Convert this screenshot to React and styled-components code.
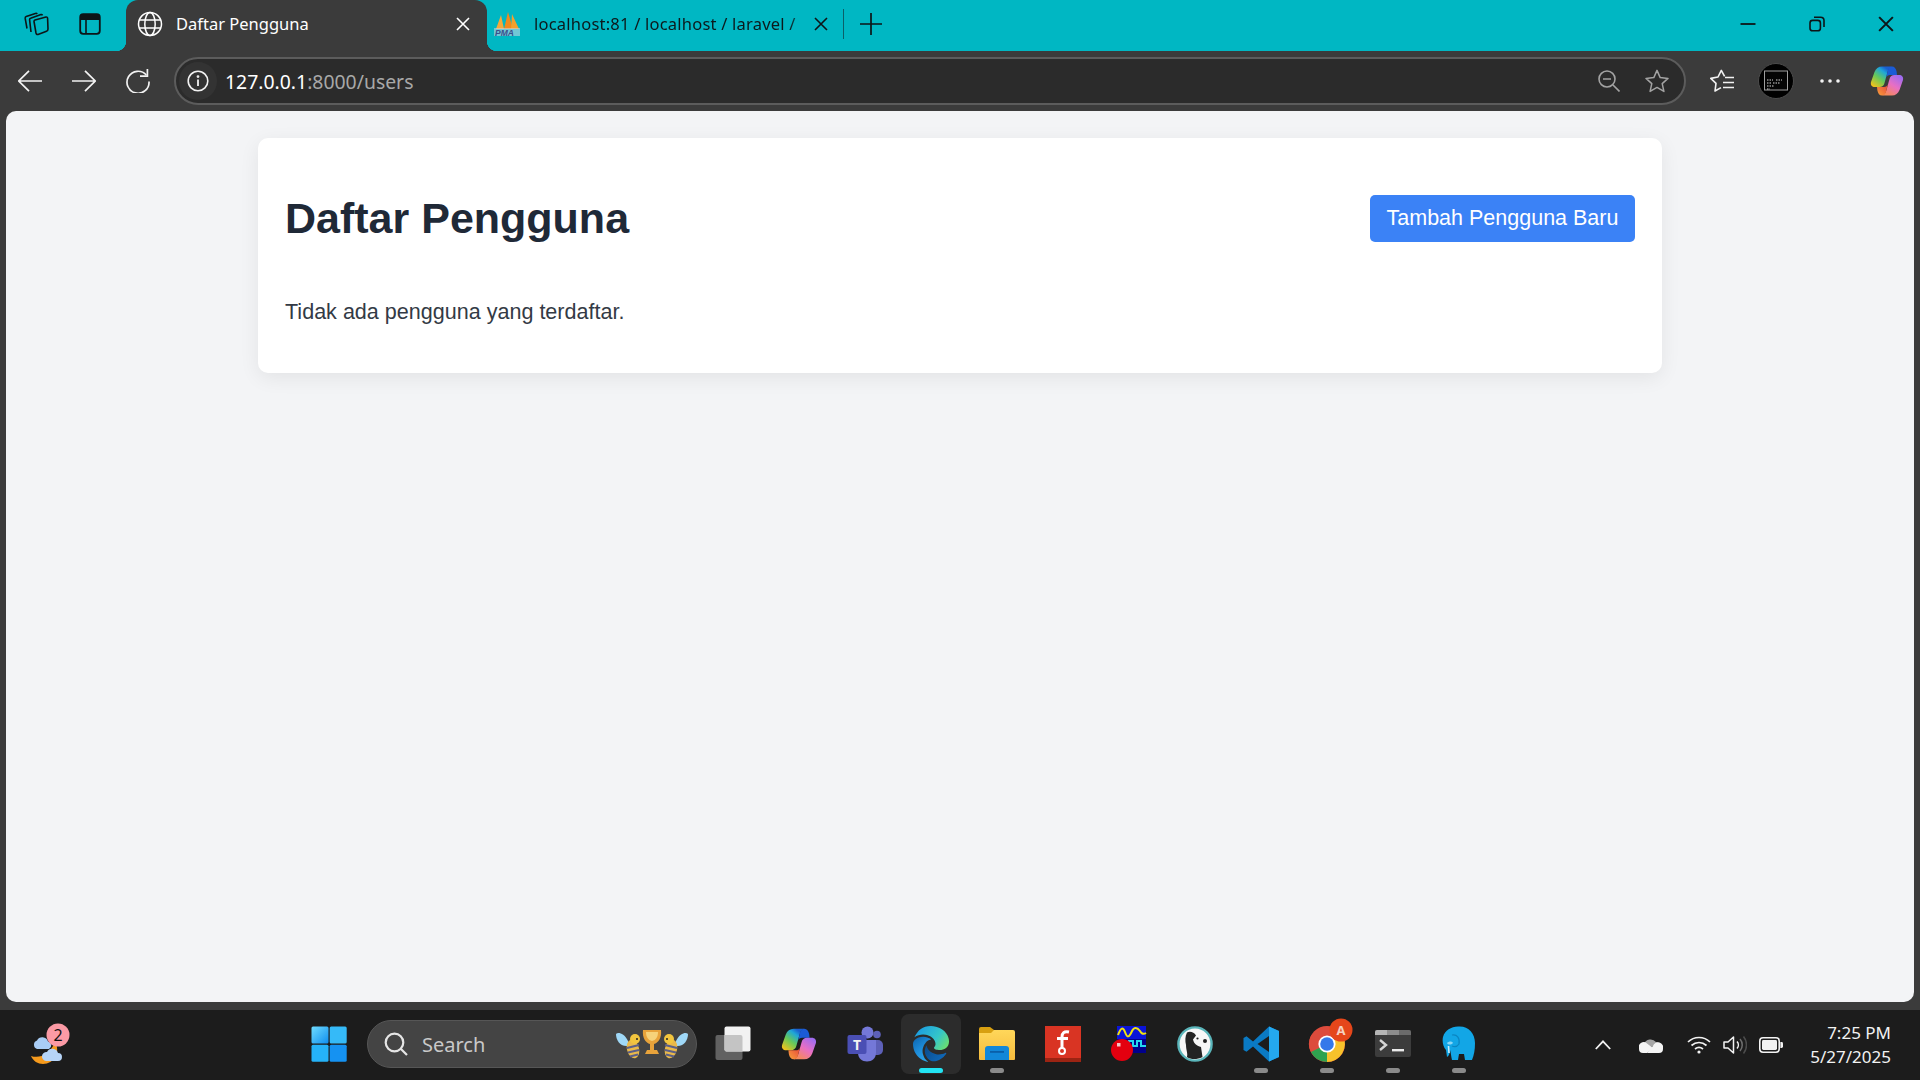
import React from 'react'
import styled, { createGlobalStyle } from 'styled-components'

const GlobalStyle = createGlobalStyle`
    html, body {
        margin: 0;
        padding: 0;
        width: 100%;
        height: 100%;
        overflow: hidden;
        background: #3b3b3b;
    }
    * {
        box-sizing: border-box;
    }
`

const CHROME_FONT = `"Noto Sans", "Open Sans", sans-serif`
const PAGE_FONT = `"Liberation Sans", Arial, sans-serif`

const Screen = styled.div`
    width: 1920px;
    height: 1080px;
    display: flex;
    flex-direction: column;
    background: #3b3b3b;
    font-family: ${CHROME_FONT};
`

/* browser tab strip */
const TabStrip = styled.div`
    height: 51px;
    flex: none;
    display: flex;
    align-items: stretch;
    padding-left: 9px;
    background: #00b7c3;
`

const StripButton = styled.div`
    width: ${props => props.$width || 54}px;
    flex: none;
    display: flex;
    align-items: center;
    justify-content: center;
    padding-bottom: 3px;
`

const ActiveTab = styled.div`
    position: relative;
    width: 361px;
    margin-left: 9px;
    flex: none;
    display: flex;
    align-items: center;
    padding: 0 17px 4px 11px;
    background: #3b3b3b;
    border-radius: 12px 12px 0 0;
    color: #ffffff;

    &::before,
    &::after {
        content: '';
        position: absolute;
        bottom: 0;
        width: 10px;
        height: 10px;
    }
    &::before {
        left: -10px;
        background: radial-gradient(circle at 0 0, transparent 10px, #3b3b3b 10.5px);
    }
    &::after {
        right: -10px;
        background: radial-gradient(circle at 100% 0, transparent 10px, #3b3b3b 10.5px);
    }
`

const InactiveTab = styled.div`
    width: 356px;
    flex: none;
    display: flex;
    align-items: center;
    padding: 0 15px 4px 7px;
    color: #0c1a1c;
`

const TabLabel = styled.span`
    flex: 1;
    min-width: 0;
    margin-left: ${props => props.$gap}px;
    font-size: 16.5px;
    letter-spacing: ${props => props.$fade ? '0.22px' : '0'};
    white-space: nowrap;
    -webkit-mask-image: ${props => props.$fade ? 'linear-gradient(to right, #000 91%, rgba(0, 0, 0, 0.25) 97%)' : 'none'};
    mask-image: ${props => props.$fade ? 'linear-gradient(to right, #000 91%, rgba(0, 0, 0, 0.25) 97%)' : 'none'};
`

const StripDivider = styled.div`
    width: 1px;
    height: 30px;
    flex: none;
    align-self: center;
    margin-bottom: 3px;
    background: #0b5f68;
`

const StripSpacer = styled.div`
    flex: 1;
`

/* address bar row */
const Toolbar = styled.div`
    height: 60px;
    flex: none;
    display: flex;
    align-items: center;
    padding: 0 6px 0 3px;
    background: #3b3b3b;
`

const ToolButton = styled.div`
    width: 54px;
    flex: none;
    display: flex;
    align-items: center;
    justify-content: center;
    margin-left: ${props => props.$offset || 0}px;
`

const AddressBar = styled.div`
    width: 1512px;
    height: 48px;
    flex: none;
    display: flex;
    align-items: center;
    margin: 0 9px 0 9px;
    padding: 0 3px 0 3px;
    background: #2b2b2b;
    border: 2px solid #5c5c5c;
    border-radius: 24px;
`

const InfoBadge = styled.div`
    width: 38px;
    height: 38px;
    flex: none;
    display: flex;
    align-items: center;
    justify-content: center;
    border-radius: 50%;
    background: #333333;
`

const Url = styled.div`
    flex: 1;
    margin-left: 8px;
    padding-top: 1px;
    font-size: 19.4px;
    color: #a8a8a8;
    white-space: nowrap;
`

const UrlHost = styled.span`
    color: #ffffff;
`

const AddressAction = styled.div`
    width: 48px;
    flex: none;
    display: flex;
    align-items: center;
    justify-content: center;
`

/* the page itself */
const Viewport = styled.div`
    flex: 1;
    min-height: 0;
    margin: 0 6px 8px;
    display: flex;
    flex-direction: column;
    align-items: center;
    background: #f3f4f6;
    border-radius: 10px;
    font-family: ${PAGE_FONT};
`

const Card = styled.div`
    width: 1404px;
    margin-top: 27px;
    padding: 57px 27px 45px 27px;
    background: #ffffff;
    border-radius: 10px;
    box-shadow: 0 5px 20px rgba(0, 0, 0, 0.07);
`

const CardHeader = styled.div`
    display: flex;
    align-items: center;
    justify-content: space-between;
    margin-bottom: 54px;
`

const Title = styled.h1`
    margin: 0;
    font-size: 43px;
    line-height: 47px;
    font-weight: 700;
    color: #1f2937;
`

const AddButton = styled.a`
    width: 265px;
    height: 47px;
    display: flex;
    align-items: center;
    justify-content: center;
    background: #3b82f6;
    border-radius: 5px;
    color: #ffffff;
    font-size: 21.5px;
`

const EmptyText = styled.p`
    margin: 0;
    font-size: 21.55px;
    line-height: 32px;
    color: #333a45;
`

/* windows taskbar */
const Taskbar = styled.div`
    height: 70px;
    flex: none;
    display: flex;
    align-items: stretch;
    background: #1c1c1c;
    position: relative;
`

const WeatherArea = styled.div`
    width: 296px;
    flex: none;
    display: flex;
    align-items: center;
    padding: 0 0 0 28px;
`

const AppSlot = styled.div`
    width: 66px;
    flex: none;
    padding: 4px 3px;
`

const AppBox = styled.div`
    height: 60px;
    display: flex;
    flex-direction: column;
    align-items: center;
    padding-top: 9px;
    background: ${props => props.$active ? '#2c2c2c' : 'transparent'};
    border-radius: 8px;
`

const AppIconWrap = styled.div`
    height: 42px;
    flex: none;
    display: flex;
    align-items: center;
    justify-content: center;
`

const RunDot = styled.div`
    width: ${props => props.$active ? 24 : 14}px;
    height: 5px;
    flex: none;
    margin-top: 3px;
    border-radius: 3px;
    background: ${props => props.$active ? '#22e4f3' : props.$on ? '#8a8a8a' : 'transparent'};
`

const SearchBox = styled.div`
    width: 330px;
    height: 48px;
    flex: none;
    align-self: center;
    margin: 0 3px 2px 5px;
    display: flex;
    align-items: center;
    padding: 0 8px 0 16px;
    background: #444444;
    border: 1px solid #565656;
    border-radius: 24px;
`

const SearchLabel = styled.span`
    flex: 1;
    margin-left: 14px;
    font-size: 20px;
    color: #c9c9c9;
`

const Tray = styled.div`
    flex: 1;
    display: flex;
    align-items: center;
    padding: 0 29px 0 87px;
`

const TrayIcon = styled.div`
    width: ${props => props.$width}px;
    flex: none;
    display: flex;
    align-items: center;
    justify-content: center;
`

const Clock = styled.div`
    margin: 0 0 1px auto;
    text-align: right;
    font-size: 17px;
    line-height: 24px;
    color: #f2f2f2;
`

function WorkspacesIcon() {
    return (
        <svg width="26" height="26" viewBox="0 0 26 26" fill="none" stroke="#0d1517" strokeWidth="1.6" strokeLinejoin="round">
            <path d="M12 9 L23 6 Q24.5 5.8 24.6 7.5 L25 18 Q25 19.8 23.5 20.2 L15 23.4 Q13.4 23.8 13 22 L11 10.5 Q11 9.4 12 9 Z" />
            <path d="M8 21 L6.6 8.8 Q6.5 7.5 7.6 7.2 L18 3.6 Q19 3.4 19.5 4.4" />
            <path d="M4 17.5 L2.2 7.4 Q2 6 3.2 5.6 L12.4 2.4 Q13.6 2 14.2 3" />
        </svg>
    )
}

function TabListIcon() {
    return (
        <svg width="22" height="22" viewBox="0 0 22 22" fill="none">
            <rect x="1.2" y="1.2" width="19.6" height="19.6" rx="3" stroke="#0d1517" strokeWidth="1.8" />
            <path d="M1 4 Q1 1 4 1 H18 Q21 1 21 4 V7 H1 Z" fill="#0d1517" />
            <path d="M7 7 V20" stroke="#0d1517" strokeWidth="1.6" />
        </svg>
    )
}

function GlobeIcon() {
    return (
        <svg width="26" height="26" viewBox="0 0 26 26" fill="none" stroke="#ffffff" strokeWidth="1.5">
            <circle cx="13" cy="13" r="11.5" />
            <ellipse cx="13" cy="13" rx="5.2" ry="11.5" />
            <path d="M2.2 9 H23.8 M2.2 17 H23.8" />
        </svg>
    )
}

function CloseIcon({ color, size = 14, weight = 1.6 }) {
    return (
        <svg width={size} height={size} viewBox="0 0 14 14" fill="none" stroke={color} strokeWidth={weight}>
            <path d="M1 1 L13 13 M13 1 L1 13" />
        </svg>
    )
}

function PmaIcon() {
    return (
        <svg width="26" height="26" viewBox="0 0 26 26">
            <path d="M7 4 L10 18 H2 Z" fill="#f5a93a" />
            <path d="M14 1 L19 18 H10 Z" fill="#f08a1d" />
            <path d="M18 3 L25 18 H17 Z" fill="#f6a02c" />
            <rect x="0" y="17" width="26" height="8" fill="#cfd6e4" opacity="0.55" />
            <text x="1" y="24.5" fontFamily={PAGE_FONT} fontSize="8.5" fontWeight="700" fontStyle="italic" fill="#3a4f8c">PMA</text>
        </svg>
    )
}

function PlusIcon() {
    return (
        <svg width="22" height="22" viewBox="0 0 22 22" stroke="#0d1517" strokeWidth="1.7">
            <path d="M11 0 V22 M0 11 H22" />
        </svg>
    )
}

function MinimizeIcon() {
    return (
        <svg width="16" height="16" viewBox="0 0 16 16" stroke="#0d1517" strokeWidth="1.8">
            <path d="M0.5 8 H15.5" />
        </svg>
    )
}

function RestoreIcon() {
    return (
        <svg width="16" height="16" viewBox="0 0 16 16" fill="none" stroke="#0d1517" strokeWidth="1.6">
            <rect x="1" y="4.4" width="10.4" height="10.4" rx="2.6" />
            <path d="M5 1.2 H11.6 Q15 1.2 15 4.6 V11" />
        </svg>
    )
}

function ArrowIcon({ flip }) {
    return (
        <svg width="24" height="22" viewBox="0 0 24 22" fill="none" stroke="#f2f2f2" strokeWidth="1.7" style={{ transform: flip ? 'scaleX(-1)' : 'none' }}>
            <path d="M0.8 11 H24 M11 0.8 L0.8 11 L11 21.2" />
        </svg>
    )
}

function RefreshIcon() {
    return (
        <svg width="24" height="24" viewBox="0 0 24 24" fill="none" stroke="#f2f2f2" strokeWidth="1.7">
            <path d="M20.3 6 A11 11 0 1 0 23 12.5" />
            <path d="M21.4 0 V7.2 H14" />
        </svg>
    )
}

function InfoIcon() {
    return (
        <svg width="22" height="22" viewBox="0 0 22 22" fill="none" stroke="#f2f2f2" strokeWidth="1.6">
            <circle cx="11" cy="11" r="9.8" />
            <path d="M11 9.6 V16" strokeWidth="1.8" />
            <circle cx="11" cy="6.6" r="0.6" fill="#f2f2f2" />
        </svg>
    )
}

function ZoomOutIcon() {
    return (
        <svg width="22" height="22" viewBox="0 0 22 22" fill="none" stroke="#a3a3a3" strokeWidth="1.6">
            <circle cx="9" cy="9" r="8" />
            <path d="M5 9 H13 M15 15 L21.5 21.5" />
        </svg>
    )
}

function StarIcon() {
    return (
        <svg width="24" height="24" viewBox="0 0 24 24" fill="none" stroke="#a3a3a3" strokeWidth="1.5" strokeLinejoin="round">
            <path d="M12 1.4 L15.2 8.6 L23 9.4 L17.2 14.6 L18.9 22.4 L12 18.4 L5.1 22.4 L6.8 14.6 L1 9.4 L8.8 8.6 Z" />
        </svg>
    )
}

function FavoritesIcon() {
    return (
        <svg width="24" height="24" viewBox="0 0 24 24" fill="none" stroke="#f2f2f2" strokeWidth="1.6" strokeLinejoin="round">
            <path d="M11 18.6 L5 22 L6 14.4 L0.8 9.4 L8 8 L11.3 1.4 L14.6 7.4" />
            <path d="M15 8.5 H24 M13 13.5 H24 M13 18.5 H24" />
        </svg>
    )
}

function ProfileIcon() {
    return (
        <svg width="36" height="36" viewBox="0 0 36 36">
            <circle cx="18" cy="18" r="17.5" fill="#000000" stroke="#4c4c4c" />
            <rect x="6.5" y="8" width="23" height="19" fill="#050505" stroke="#a0a0a0" />
            <path d="M9 17 H15 M18 17 H24 M9 20 H13 M15 20 H22 M9 23 H16 M9 26 H12" stroke="#d8d8d8" strokeWidth="1" strokeDasharray="1.5 1" />
        </svg>
    )
}

function DotsIcon() {
    return (
        <svg width="20" height="4" viewBox="0 0 20 4" fill="#f2f2f2">
            <circle cx="2" cy="2" r="1.8" />
            <circle cx="10" cy="2" r="1.8" />
            <circle cx="18" cy="2" r="1.8" />
        </svg>
    )
}

function CopilotIcon({ id, size }) {
    return (
        <svg width={size} height={size} viewBox="0 0 34 30">
            <defs>
                <linearGradient id={`${id}a`} x1="0.1" y1="0.95" x2="0.75" y2="0.1">
                    <stop offset="0" stopColor="#f2c21c" />
                    <stop offset="0.45" stopColor="#66c95a" />
                    <stop offset="0.8" stopColor="#1fa6d8" />
                    <stop offset="1" stopColor="#1a5fd0" />
                </linearGradient>
                <linearGradient id={`${id}b`} x1="0.9" y1="0.1" x2="0.3" y2="1">
                    <stop offset="0" stopColor="#9f6cf0" />
                    <stop offset="0.5" stopColor="#e86fc4" />
                    <stop offset="1" stopColor="#f58a5a" />
                </linearGradient>
                <linearGradient id={`${id}c`} x1="0" y1="1" x2="1" y2="0">
                    <stop offset="0" stopColor="#f7a13a" />
                    <stop offset="1" stopColor="#e8453c" />
                </linearGradient>
            </defs>
            <path d="M12 0.5 H22 C19 1.5 18 4 17.4 6.5 L14.5 17 C14 19.5 12 21 9.5 21 H5 C2 21 0.3 19 1 16 L4.5 6 C5.8 2.5 8.5 0.5 12 0.5 Z" fill={`url(#${id}a)`} />
            <path d="M22 0.5 C24.5 0.5 26 2.5 26.6 5.5 L27 9 H20 C18 9 16.8 10 16.3 11.5 L17.4 6.5 C18 3.5 19 0.5 22 0.5 Z" fill="#1b5bd6" />
            <path d="M22 29.5 H12 C15 28.5 16 26 16.6 23.5 L19.5 13 C20 10.5 22 9 24.5 9 H29 C32 9 33.7 11 33 14 L29.5 24 C28.2 27.5 25.5 29.5 22 29.5 Z" fill={`url(#${id}b)`} />
            <path d="M12 29.5 C9.5 29.5 8 27.5 7.4 24.5 L7 21 H14 C16 21 17.2 20 17.7 18.5 L16.6 23.5 C16 26.5 15 29.5 12 29.5 Z" fill={`url(#${id}c)`} />
        </svg>
    )
}

function WeatherIcon() {
    return (
        <svg width="44" height="46" viewBox="0 0 44 46">
            <path d="M27 20 C33 30 26 42 15 42 C10 42 5 39 3 34 C12 37 22 32 27 20 Z" fill="#f59a1d" />
            <path d="M9 27 H21 A4 4 0 0 0 20 19.5 A6 6 0 0 0 9 18.5 A4.5 4.5 0 0 0 9 27 Z" fill="#a9cdf5" />
            <path d="M18 39 H30 A4 4 0 0 0 30 31 A6 6 0 0 0 19 30 A4.5 4.5 0 0 0 18 39 Z" fill="#b6d4f7" />
            <circle cx="30" cy="13" r="11.5" fill="#fb9aa5" />
            <text x="30" y="18.5" textAnchor="middle" fontFamily={CHROME_FONT} fontSize="16" fill="#111111">2</text>
        </svg>
    )
}

function StartIcon() {
    return (
        <svg width="36" height="36" viewBox="0 0 36 36">
            <defs>
                <linearGradient id="startTile" x1="0" y1="0" x2="1" y2="1">
                    <stop offset="0" stopColor="#6fdcff" />
                    <stop offset="1" stopColor="#0f8ff0" />
                </linearGradient>
            </defs>
            <rect x="0.5" y="0.5" width="17" height="17" rx="1.5" fill="url(#startTile)" />
            <rect x="18.7" y="0.5" width="17" height="17" rx="1.5" fill="#35baf8" />
            <rect x="0.5" y="18.7" width="17" height="17" rx="1.5" fill="#25b2f8" />
            <rect x="18.7" y="18.7" width="17" height="17" rx="1.5" fill="#1592f2" />
        </svg>
    )
}

function SearchIcon() {
    return (
        <svg width="24" height="24" viewBox="0 0 24 24" fill="none" stroke="#e6e6e6" strokeWidth="2.2">
            <circle cx="10.5" cy="10.5" r="8.8" />
            <path d="M17 17 L23 23" />
        </svg>
    )
}

function Bee({ flip }) {
    return (
        <g transform={flip ? 'translate(72 0) scale(-1 1)' : undefined}>
            <path d="M12 12 C8 4 2 3 0 5 C0 11 4 18 12 17 Z" fill="#9fd8f7" />
            <ellipse cx="17" cy="20" rx="6" ry="9.5" fill="#e9b94a" transform="rotate(-14 17 20)" />
            <path d="M11 19 L23 16 M12 23.5 L23 21 M14 27.5 L22 25.5" stroke="#5b5f88" strokeWidth="2.2" />
            <circle cx="19" cy="10" r="5" fill="#f2c53e" />
            <circle cx="21" cy="10" r="1" fill="#222222" />
        </g>
    )
}

function BeesIcon() {
    return (
        <svg width="72" height="30" viewBox="0 0 72 30">
            <Bee />
            <Bee flip />
            <path d="M27 1 H45 C46 9 42 14 38 15 V21 H41 L43 25 H29 L31 21 H34 V15 C30 14 26 9 27 1 Z" fill="#e8a33b" />
            <path d="M30 3 H42 C42 8 40 11 36 12 C32 11 30 8 30 3 Z" fill="#f6d27a" />
        </svg>
    )
}

function TaskViewIcon() {
    return (
        <svg width="36" height="36" viewBox="0 0 36 36">
            <rect x="0.5" y="9" width="27" height="25" rx="2" fill="#616161" />
            <rect x="9.5" y="0.5" width="26" height="25" rx="2" fill="#f2f2f2" />
            <path d="M9.5 9 H25.5 Q27.5 9 27.5 11 V25.5 H11.5 Q9.5 25.5 9.5 23.5 Z" fill="#c4c4c4" />
        </svg>
    )
}

function TeamsIcon() {
    return (
        <svg width="36" height="36" viewBox="0 0 36 36">
            <circle cx="30" cy="8.5" r="3.8" fill="#5d60b8" />
            <rect x="24" y="14" width="12" height="15" rx="5" fill="#5d60b8" />
            <circle cx="20.5" cy="6.5" r="6" fill="#7478d8" />
            <path d="M11 14 H29 V27 C29 32 25 35.5 20 35.5 C15 35.5 11 32 11 27 Z" fill="#7478d8" />
            <rect x="0.5" y="9" width="19" height="19" rx="2" fill="#4a4fb4" />
            <text x="10" y="24" textAnchor="middle" fontFamily={CHROME_FONT} fontWeight="700" fontSize="14" fill="#f2f2f2">T</text>
        </svg>
    )
}

function EdgeIcon() {
    return (
        <svg width="36" height="36" viewBox="0 0 24 24">
            <defs>
                <linearGradient id="edgeTop" x1="0" y1="0.3" x2="1" y2="0.8">
                    <stop offset="0" stopColor="#1b9de2" />
                    <stop offset="0.6" stopColor="#35c6c8" />
                    <stop offset="1" stopColor="#6fe06a" />
                </linearGradient>
                <linearGradient id="edgeLeft" x1="0.2" y1="0" x2="0.8" y2="1">
                    <stop offset="0" stopColor="#0f6ab4" />
                    <stop offset="0.5" stopColor="#1f8fdc" />
                    <stop offset="1" stopColor="#2fa8ea" />
                </linearGradient>
                <linearGradient id="edgeWave" x1="0" y1="0" x2="1" y2="0.6">
                    <stop offset="0" stopColor="#0a4a8a" />
                    <stop offset="1" stopColor="#0f68b8" />
                </linearGradient>
            </defs>
            <path d="M21.86 17.86q.14 0 .25.12.1.13.1.25t-.11.33l-.32.46-.43.53-.44.5q-.21.25-.38.42l-.22.23q-.58.53-1.34 1.04-.76.51-1.6.91-.86.4-1.74.64t-1.67.24q-.9 0-1.69-.28-.8-.28-1.48-.78-.68-.5-1.22-1.17-.53-.66-.92-1.44-.38-.77-.58-1.6-.2-.83-.2-1.67 0-1 .32-1.96.33-.97.87-1.8.14.95.55 1.77.41.82 1.02 1.5.6.68 1.38 1.21.78.54 1.64.9.86.36 1.77.56.92.2 1.8.2 1.12 0 2.18-.24 1.06-.23 2.06-.72l.2-.1.2-.05z" fill="url(#edgeWave)" />
            <path d="M6.36 16.59q0 1.1.27 2.15.27 1.06.78 2.03.51.96 1.24 1.77.74.82 1.66 1.4-1.47-.2-2.8-.74-1.33-.55-2.48-1.37-1.15-.83-2.08-1.9-.92-1.07-1.58-2.33T.36 14.94Q0 13.54 0 12.06q0-.81.32-1.49.31-.68.83-1.23.53-.55 1.2-.96.66-.4 1.35-.66.74-.27 1.5-.39.78-.12 1.55-.12.7 0 1.42.1.72.12 1.4.35.68.23 1.32.57.63.35 1.16.83-.35 0-.7.07-.33.07-.65.23v-.02q-.63.28-1.2.74-.57.46-1.05 1.04-.48.58-.87 1.26-.38.67-.65 1.39-.27.71-.42 1.44-.15.72-.15 1.38z" fill="url(#edgeLeft)" />
            <path d="M11.96.06q1.7 0 3.33.39 1.63.38 3.07 1.15 1.43.77 2.62 1.93 1.18 1.16 1.98 2.7.49.94.76 1.96.28 1 .28 2.08 0 .89-.23 1.7-.24.8-.69 1.48-.45.68-1.1 1.22-.64.53-1.45.88-.54.24-1.11.36-.58.13-1.16.13-.42 0-.97-.03-.54-.03-1.1-.12-.55-.1-1.05-.28-.5-.19-.84-.5-.12-.09-.23-.24-.1-.16-.1-.33 0-.15.16-.35.16-.2.35-.5.2-.28.36-.68.16-.4.16-.95 0-1.06-.4-1.96-.4-.91-1.06-1.64-.66-.74-1.52-1.28-.86-.55-1.79-.89-.84-.3-1.72-.44-.87-.14-1.76-.14-1.55 0-3.06.45T.94 7.55q.71-1.74 1.81-3.13Q3.85 3.03 5.2 2.07q1.34-.96 2.96-1.5Q9.8.06 11.96.06z" fill="url(#edgeTop)" />
        </svg>
    )
}

function ExplorerIcon() {
    return (
        <svg width="36" height="34" viewBox="0 0 36 34">
            <defs>
                <linearGradient id="folderBody" x1="0" y1="0" x2="0" y2="1">
                    <stop offset="0" stopColor="#ffd75a" />
                    <stop offset="1" stopColor="#f5bb3d" />
                </linearGradient>
            </defs>
            <path d="M0 2 Q0 0 2 0 H11 L15 3 V7 H0 Z" fill="#d8a011" />
            <path d="M0 6 L12 6 L15 3 H34 Q36 3 36 5 V32 Q36 33 35 33 H1 Q0 33 0 32 Z" fill="url(#folderBody)" />
            <path d="M6 33 V22 Q6 19 9 19 H27 Q30 19 30 22 V33 Z" fill="#1287d8" />
            <rect x="11" y="24" width="14" height="1.8" fill="#0a5fa8" />
        </svg>
    )
}

function FlashIcon() {
    return (
        <svg width="36" height="36" viewBox="0 0 36 36">
            <rect width="36" height="36" fill="#d93423" />
            <rect y="32" width="36" height="4" fill="#9c2413" />
            <path d="M24 6 C19 5 17 7 17 11 V22 M12 12.5 H23" fill="none" stroke="#ffffff" strokeWidth="3" />
            <circle cx="17" cy="25" r="3" fill="none" stroke="#ffffff" strokeWidth="2" />
        </svg>
    )
}

function ScopeIcon() {
    return (
        <svg width="36" height="36" viewBox="0 0 36 36">
            <rect x="6" y="0" width="29" height="13" fill="#0a14d8" />
            <rect x="6" y="13" width="29" height="14" fill="#00008c" />
            <path d="M7 9 C10 1 12 1 14 6 C16 12 18 12 21 5 C23 1 26 1 29 5 C30 7 32 9 35 7" fill="none" stroke="#f2e30e" strokeWidth="2" />
            <path d="M14 19 H18 V15 H22 V20 H26 V15 H30 V20 H35" fill="none" stroke="#22d8f0" strokeWidth="2" />
            <circle cx="11" cy="24" r="11" fill="#e4000f" />
            <rect x="6" y="17" width="3.5" height="3.5" fill="#f3c4c4" />
        </svg>
    )
}

function BeaverIcon() {
    return (
        <svg width="36" height="36" viewBox="0 0 36 36">
            <circle cx="18" cy="18" r="16.6" fill="#f7f7f7" stroke="#5ab5ba" strokeWidth="2.4" />
            <path d="M10 6.5 C13 5 17 6 19 9.5 L16 13.5 C17 18 20 20 24 21 L25.5 31 C20 33.8 14 33.8 10 31 C11 27 9 24 9 19 C8 15 8 10.5 10 6.5 Z" fill="#232323" />
            <circle cx="28" cy="15" r="2" fill="#232323" />
            <circle cx="20.5" cy="12.5" r="1.1" fill="#232323" />
        </svg>
    )
}

function VsCodeIcon() {
    return (
        <svg width="36" height="36" viewBox="0 0 36 36">
            <path d="M26 0.5 L36 5 V31 L26 35.5 L10 20.5 L3.5 25.8 L0.5 24 V12 L3.5 10.2 L10 15.5 Z M26 10 L14.5 18 L26 26 Z" fill="#0a7ac4" fillRule="evenodd" />
            <path d="M26 0.5 L36 5 V31 L26 35.5 Z M26 0.5 Z" fill="#24a8ee" />
        </svg>
    )
}

function ChromeIcon() {
    return (
        <svg width="52" height="52" viewBox="-8 0 52 52">
            <circle cx="18" cy="26" r="18" fill="#dd4b3c" />
            <path d="M18 26 L2.4 35 A18 18 0 0 1 2.4 17 Z" fill="#dd4b3c" />
            <path d="M18 26 L2 34 A18 18 0 0 0 18 44 L27 28 Z" fill="#2fa24f" />
            <path d="M18 26 L34 18 A18 18 0 0 1 18 44 Z" fill="#f7c22b" />
            <circle cx="18" cy="26" r="8.6" fill="#ffffff" />
            <circle cx="18" cy="26" r="6.8" fill="#3478ea" />
            <circle cx="32" cy="12" r="11.5" fill="#e5461a" />
            <text x="32" y="17" textAnchor="middle" fontFamily={CHROME_FONT} fontSize="13" fontWeight="700" fill="#f6d0c0">A</text>
        </svg>
    )
}

function TerminalIcon() {
    return (
        <svg width="36" height="28" viewBox="0 0 36 28">
            <rect width="36" height="27" rx="2" fill="#3c3c3c" />
            <path d="M0 2 Q0 0 2 0 H12 V5 H0 Z" fill="#b5b5b5" />
            <rect x="12" y="0" width="12" height="5" fill="#8d8d8d" />
            <path d="M24 0 H34 Q36 0 36 2 V5 H24 Z" fill="#6b6b6b" />
            <path d="M5 10 L11 15 L5 20" fill="none" stroke="#d5d5d5" strokeWidth="2.4" />
            <rect x="17" y="19" width="12" height="2.4" fill="#eaeaea" />
        </svg>
    )
}

function ElephantIcon() {
    return (
        <svg width="34" height="36" viewBox="0 0 34 36">
            <path d="M16 0.5 C26 -0.5 33 7 33 17 C33 24 32 29 30 34 H23 L22 28 H17 L16 34 H10 C9 30 9 27 8 24 C8 27 7 30 5 31 L4 24 C1 21 0 15 1 11 C3 4 9 1 16 0.5 Z" fill="#12a6e6" />
            <path d="M10 9 C15 8 18 12 17 18 C15 21 12 21 10 20" fill="none" stroke="#0b86c2" strokeWidth="1.2" />
            <path d="M5 17 C7 15 10 15 11 17 C9 19 6 19 5 17 Z" fill="#8bd6f5" />
            <path d="M6.5 20 L7 27" stroke="#c9ecfa" strokeWidth="1.6" />
        </svg>
    )
}

function ChevronIcon() {
    return (
        <svg width="16" height="10" viewBox="0 0 16 10" fill="none" stroke="#f2f2f2" strokeWidth="1.8">
            <path d="M0.8 9 L8 1.4 L15.2 9" />
        </svg>
    )
}

function OneDriveIcon() {
    return (
        <svg width="24" height="16" viewBox="0 0 24 16">
            <path d="M5 7 A7 7 0 0 1 17 5 A4 4 0 0 1 21 8 L12 10 Z" fill="#a6a6a6" />
            <path d="M0 12 A5 5 0 0 1 8 6.5 L14 11 L8 16 H4 A4 4 0 0 1 0 12 Z" fill="#f4f4f4" />
            <path d="M8 16 L14 9 A5 5 0 0 1 24 12 A4 4 0 0 1 20 16 Z" fill="#f4f4f4" />
        </svg>
    )
}

function WifiIcon() {
    return (
        <svg width="24" height="18" viewBox="0 0 24 18" fill="none" stroke="#f2f2f2" strokeWidth="1.7">
            <path d="M1 6 C7 0 17 0 23 6" />
            <path d="M4.5 9.5 C9 5.5 15 5.5 19.5 9.5" />
            <path d="M8 13 C10.5 11 13.5 11 16 13" />
            <circle cx="12" cy="16" r="1.6" fill="#f2f2f2" stroke="none" />
        </svg>
    )
}

function SpeakerIcon() {
    return (
        <svg width="24" height="20" viewBox="0 0 24 20" fill="none" stroke="#f2f2f2" strokeWidth="1.5" strokeLinejoin="round">
            <path d="M1 7 H5 L10.5 2 V18 L5 13 H1 Z" />
            <path d="M14 6.5 C15.8 8.5 15.8 11.5 14 13.5" />
            <path d="M17 4 C20 7.5 20 12.5 17 16" stroke="#6e6e6e" />
            <path d="M20.5 1.5 C24.5 6.5 24.5 13.5 20.5 18.5" stroke="#4c4c4c" />
        </svg>
    )
}

function BatteryIcon() {
    return (
        <svg width="24" height="16" viewBox="0 0 24 16" fill="none">
            <rect x="0.8" y="0.8" width="19.4" height="14.4" rx="3.2" stroke="#f2f2f2" strokeWidth="1.6" />
            <rect x="3" y="3" width="15" height="10" rx="1.4" fill="#f2f2f2" />
            <path d="M21.4 5 H22.6 Q24 5 24 6.4 V9.6 Q24 11 22.6 11 H21.4 Z" fill="#f2f2f2" />
        </svg>
    )
}

function DockApp({ children, active, running }) {
    return (
        <AppSlot>
            <AppBox $active={active}>
                <AppIconWrap>{children}</AppIconWrap>
                <RunDot $active={active} $on={running} />
            </AppBox>
        </AppSlot>
    )
}

function App() {
    return (
        <>
            <GlobalStyle />
            <Screen>
                <TabStrip>
                    <StripButton><WorkspacesIcon /></StripButton>
                    <StripButton><TabListIcon /></StripButton>
                    <ActiveTab>
                        <GlobeIcon />
                        <TabLabel $gap={13}>Daftar Pengguna</TabLabel>
                        <CloseIcon color="#ffffff" />
                    </ActiveTab>
                    <InactiveTab>
                        <PmaIcon />
                        <TabLabel $gap={14} $fade>localhost:81 / localhost / laravel /</TabLabel>
                        <CloseIcon color="#0d1517" />
                    </InactiveTab>
                    <StripDivider />
                    <StripButton><PlusIcon /></StripButton>
                    <StripSpacer />
                    <StripButton $width={69}><MinimizeIcon /></StripButton>
                    <StripButton $width={69}><RestoreIcon /></StripButton>
                    <StripButton $width={69}><CloseIcon color="#0d1517" size={16} weight={1.8} /></StripButton>
                </TabStrip>

                <Toolbar>
                    <ToolButton><ArrowIcon /></ToolButton>
                    <ToolButton><ArrowIcon flip /></ToolButton>
                    <ToolButton><RefreshIcon /></ToolButton>
                    <AddressBar>
                        <InfoBadge><InfoIcon /></InfoBadge>
                        <Url><UrlHost>127.0.0.1</UrlHost>:8000/users</Url>
                        <AddressAction><ZoomOutIcon /></AddressAction>
                        <AddressAction><StarIcon /></AddressAction>
                    </AddressBar>
                    <ToolButton><FavoritesIcon /></ToolButton>
                    <ToolButton><ProfileIcon /></ToolButton>
                    <ToolButton><DotsIcon /></ToolButton>
                    <ToolButton $offset={3}><CopilotIcon id="edgeCopilot" size={34} /></ToolButton>
                </Toolbar>

                <Viewport>
                    <Card>
                        <CardHeader>
                            <Title>Daftar Pengguna</Title>
                            <AddButton>Tambah Pengguna Baru</AddButton>
                        </CardHeader>
                        <EmptyText>Tidak ada pengguna yang terdaftar.</EmptyText>
                    </Card>
                </Viewport>

                <Taskbar>
                    <WeatherArea><WeatherIcon /></WeatherArea>
                    <DockApp><StartIcon /></DockApp>
                    <SearchBox>
                        <SearchIcon />
                        <SearchLabel>Search</SearchLabel>
                        <BeesIcon />
                    </SearchBox>
                    <DockApp><TaskViewIcon /></DockApp>
                    <DockApp><CopilotIcon id="dockCopilot" size={36} /></DockApp>
                    <DockApp><TeamsIcon /></DockApp>
                    <DockApp active><EdgeIcon /></DockApp>
                    <DockApp running><ExplorerIcon /></DockApp>
                    <DockApp><FlashIcon /></DockApp>
                    <DockApp><ScopeIcon /></DockApp>
                    <DockApp><BeaverIcon /></DockApp>
                    <DockApp running><VsCodeIcon /></DockApp>
                    <DockApp running><ChromeIcon /></DockApp>
                    <DockApp running><TerminalIcon /></DockApp>
                    <DockApp running><ElephantIcon /></DockApp>
                    <Tray>
                        <TrayIcon $width={48}><ChevronIcon /></TrayIcon>
                        <TrayIcon $width={48}><OneDriveIcon /></TrayIcon>
                        <TrayIcon $width={48}><WifiIcon /></TrayIcon>
                        <TrayIcon $width={24}><SpeakerIcon /></TrayIcon>
                        <TrayIcon $width={48}><BatteryIcon /></TrayIcon>
                        <Clock>
                            <div>7:25 PM</div>
                            <div>5/27/2025</div>
                        </Clock>
                    </Tray>
                </Taskbar>
            </Screen>
        </>
    )
}

export default App
